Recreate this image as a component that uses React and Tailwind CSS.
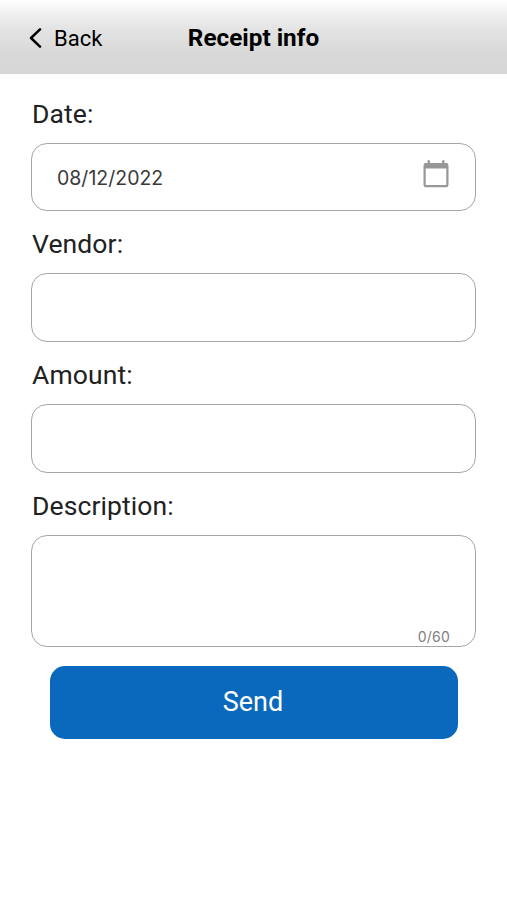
import React, { useState } from "react";

const Field = ({ label, children, className }) => (
  <div className={className}>
    <label className="block h-[40px] leading-[40px] pl-px text-[26.5px] tracking-[0.1px] text-[#212121]">
      {label}
    </label>
    {children}
  </div>
);

const App = () => {
  const [vendor, setVendor] = useState("");
  const [amount, setAmount] = useState("");
  const [description, setDescription] = useState("");

  return (
    <div className="w-full h-screen bg-white font-['Roboto',sans-serif] overflow-hidden">
      <header className="h-[74px] grid grid-cols-3 items-center pt-[3px] bg-[linear-gradient(to_bottom,#fff_0px,#fbfbfb_4px,#f1f1f1_12px,#e3e3e3_30px,#d8d8d8_54px,#d6d6d6_74px)] text-black">
        <button className="flex items-center pl-[29px] text-[22px]">
          <svg width="13" height="20" viewBox="0 0 13 20" fill="none" className="mr-3 mb-[2px]">
            <path
              d="M11 1.4L2 10l9 8.6"
              stroke="black"
              strokeWidth="2.5"
              strokeLinecap="round"
              strokeLinejoin="round"
            />
          </svg>
          Back
        </button>
        <h1 className="text-center text-[24.3px] font-bold whitespace-nowrap">Receipt info</h1>
      </header>

      <main className="px-[31px] pt-[20px]">
        <Field label="Date:">
          <div className="mt-[9px] h-[68px] rounded-[16px] border border-[#a6a6a6] flex items-center justify-between pl-[25px] pr-[26px]">
            <span className="pt-[3px] font-['Inter',sans-serif] text-[19.5px] text-[#3a3a3a]">
              08/12/2022
            </span>
            <svg width="26" height="28" viewBox="0 0 26 28" className="mb-[7px]">
              <rect
                x="1.6"
                y="4"
                width="22.8"
                height="22.2"
                rx="1.8"
                fill="none"
                stroke="#979797"
                strokeWidth="2.2"
              />
              <path d="M1.6 3h22.8v5.4H1.6zM4.5 0.2h2.4v4H4.5zM19.1 0.2h2.4v4h-2.4z" fill="#979797" />
            </svg>
          </div>
        </Field>
        <Field label="Vendor:" className="mt-[13px]">
          <input
            value={vendor}
            onChange={(e) => setVendor(e.target.value)}
            className="block mt-[9px] w-full h-[69px] rounded-[16px] border border-[#a6a6a6] px-6 text-[20px] outline-none"
          />
        </Field>
        <Field label="Amount:" className="mt-[13px]">
          <input
            value={amount}
            onChange={(e) => setAmount(e.target.value)}
            className="block mt-[9px] w-full h-[69px] rounded-[16px] border border-[#a6a6a6] px-6 text-[20px] outline-none"
          />
        </Field>
        <Field label="Description:" className="mt-[13px]">
          <div className="mt-[9px] h-[112px] rounded-[16px] border border-[#a6a6a6] flex flex-col px-[25px]">
            <textarea
              value={description}
              maxLength={60}
              onChange={(e) => setDescription(e.target.value)}
              className="flex-1 min-h-0 resize-none outline-none text-[20px]"
            />
            <span className="self-end font-['Inter',sans-serif] text-[14px] tracking-[0.2px] leading-[18px] text-[#808080]">
              {description.length}/60
            </span>
          </div>
        </Field>
        <button className="block ml-[19px] mt-[19px] w-[408px] h-[73px] rounded-[15px] bg-[#0a69bd] pr-[2px] text-white text-[27px]">
          Send
        </button>
      </main>
    </div>
  );
};

export default App;
